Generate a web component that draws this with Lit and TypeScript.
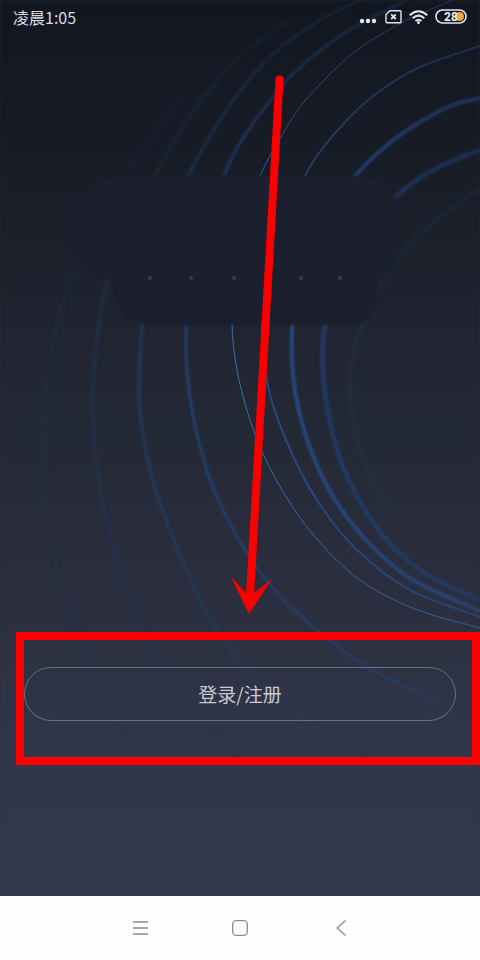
import { LitElement, html, svg, css } from "lit";
import { customElement } from "lit/decorators.js";

type Point = [number, number];

interface Arc {
  tone: string;
  width: number;
  points: Point[];
}

// Light trails of the backdrop, from the outermost to the innermost.
const ARCS: Arc[] = [
  { tone: "haze", width: 7, points: [[190, 86], [125, 176], [75, 270], [52, 350], [43, 460], [57, 570], [85, 655], [130, 740]] },
  { tone: "dim", width: 5, points: [[290, 20], [250, 48], [198, 104], [155, 176], [110, 270], [93, 390], [100, 490], [120, 565], [142, 625], [172, 682], [235, 754]] },
  { tone: "faint", width: 4, points: [[360, 0], [320, 20], [280, 48], [247, 82], [217, 125], [188, 176], [152, 265], [139, 385], [150, 470], [178, 550], [214, 625], [260, 684], [310, 723], [365, 752]] },
  { tone: "soft", width: 3, points: [[407, 0], [353, 28], [317, 53], [287, 80], [263, 110], [240, 143], [224, 176], [196, 250], [186, 335], [192, 410], [212, 485], [245, 550], [278, 594], [318, 631], [370, 669], [440, 702]] },
  { tone: "bright", width: 1, points: [[453, 0], [413, 17], [380, 35], [353, 53], [327, 77], [300, 107], [281, 137], [260, 176], [240, 237], [232, 310], [237, 370], [256, 437], [282, 490], [316, 538], [360, 580], [415, 609], [480, 628]] },
  { tone: "clear", width: 2, points: [[480, 46], [420, 67], [377, 93], [347, 120], [322, 149], [305, 176], [275, 245], [262, 325], [268, 386], [286, 440], [315, 497], [355, 548], [410, 590], [480, 617]] },
  { tone: "clear", width: 4, points: [[480, 98], [453, 105], [420, 122], [387, 145], [357, 174], [322, 222], [297, 290], [293, 375], [313, 456], [350, 521], [405, 575], [480, 611]] },
  { tone: "inside", width: 5, points: [[480, 150], [445, 164], [415, 181], [388, 205], [345, 265], [323, 345], [336, 446], [372, 521], [420, 570], [480, 600]] },
  { tone: "inner", width: 6, points: [[480, 188], [430, 225], [398, 258], [367, 310], [350, 380], [362, 455], [395, 520]] },
];

const SPARKS: Point[] = [[150, 278], [191, 278], [234, 278], [301, 278], [340, 278]];

// Smooth curve through every point (Catmull-Rom as cubic segments).
function curve(points: Point[]): string {
  let d = `M${points[0][0]} ${points[0][1]}`;
  for (let i = 0; i < points.length - 1; i++) {
    const p0 = points[Math.max(i - 1, 0)];
    const p1 = points[i];
    const p2 = points[i + 1];
    const p3 = points[Math.min(i + 2, points.length - 1)];
    const span = Math.hypot(p2[0] - p1[0], p2[1] - p1[1]);
    const before = Math.hypot(p1[0] - p0[0], p1[1] - p0[1]);
    const after = Math.hypot(p3[0] - p2[0], p3[1] - p2[1]);
    // Handles are scaled by the share of each segment, so uneven spacing stays smooth.
    const a = span / (span + before) / 3;
    const b = span / (span + after) / 3;
    const c = [
      p1[0] + (p2[0] - p0[0]) * a,
      p1[1] + (p2[1] - p0[1]) * a,
      p2[0] - (p3[0] - p1[0]) * b,
      p2[1] - (p3[1] - p1[1]) * b,
    ].map((n) => n.toFixed(1));
    d += `C${c[0]} ${c[1]} ${c[2]} ${c[3]} ${p2[0]} ${p2[1]}`;
  }
  return d;
}

@customElement("night-backdrop")
export class NightBackdrop extends LitElement {
  static styles = css`
    :host { display: block; }
    .art { display: block; width: 100%; height: 100%; }
    .arc { fill: none; }
    .bright { stroke: #3d78c0; opacity: 0.9; }
    .clear { stroke: #27508e; opacity: 0.85; }
    .soft { stroke: #21487c; opacity: 0.85; }
    .inside { stroke: #21447a; opacity: 0.65; }
    .faint { stroke: #1f456f; opacity: 0.55; }
    .dim { stroke: #203c60; opacity: 0.35; }
    .inner { stroke: #203c60; opacity: 0.25; }
    .haze { stroke: #243a60; opacity: 0.12; }
    .cover { fill: #1b1f2e; }
    .spark { fill: #2c4f82; opacity: 0.7; }
    .shade { stop-color: #fff; }
  `;

  render() {
    return html`
      <svg class="art" viewBox="0 0 480 896" preserveAspectRatio="xMidYMid slice" aria-hidden="true">
        <defs>
          <filter id="glow" x="-10%" y="-10%" width="120%" height="120%" color-interpolation-filters="sRGB">
            <feGaussianBlur stdDeviation="1" />
          </filter>
          <linearGradient id="fade" x1="0" y1="0" x2="0" y2="760" gradientUnits="userSpaceOnUse">
            <stop class="shade" offset="0" stop-opacity="0.4" />
            <stop class="shade" offset="0.22" stop-opacity="0.75" />
            <stop class="shade" offset="0.45" stop-opacity="1" />
            <stop class="shade" offset="0.7" stop-opacity="0.9" />
            <stop class="shade" offset="0.88" stop-opacity="0.6" />
            <stop class="shade" offset="1" stop-opacity="0.3" />
          </linearGradient>
          <mask id="veil" x="0" y="0" width="480" height="896" maskUnits="userSpaceOnUse">
            <rect width="480" height="896" fill="url(#fade)" />
          </mask>
        </defs>
        <g mask="url(#veil)">
          ${ARCS.map((a) => svg`<path class="arc ${a.tone}" d=${curve(a.points)} stroke-width=${a.width}
            filter=${a.width > 2 ? "url(#glow)" : "none"} />`)}
        </g>
        <path class="cover" filter="url(#glow)" d="M124 176H358C385 176 398 192 398 212V245C398 264 388 279 376 281C380 306 372 325 350 325H152C128 325 114 308 112 280C88 278 72 258 72 234V220C72 194 94 176 124 176Z" />
        ${SPARKS.map((p) => svg`<ellipse class="spark" cx=${p[0]} cy=${p[1]} rx="2" ry="2" />`)}
      </svg>
    `;
  }
}

@customElement("status-bar")
export class StatusBar extends LitElement {
  static styles = css`
    :host {
      display: flex;
      align-items: center;
      justify-content: space-between;
      height: 34px;
      padding: 0 13px;
      color: #dadce2;
      font: 16px/24px "Noto Sans CJK SC", sans-serif;
    }
    .icons { display: flex; align-items: center; gap: 6px; }
    .icon { display: block; }
    .level { font: bold 12px/16px Roboto, sans-serif; fill: #eceef2; }
  `;

  render() {
    return html`
      <span>凌晨1:05</span>
      <div class="icons">
        <svg class="icon" width="20" height="16" viewBox="0 0 20 16" fill="#e4e6ea" aria-hidden="true">
          <circle cx="3" cy="12" r="2.200" /><circle cx="9" cy="12" r="2.200" /><circle cx="15" cy="12" r="2.200" />
        </svg>
        <svg class="icon" width="18" height="16" viewBox="0 0 18 16" fill="none" stroke="#e4e6ea" stroke-width="1.4" aria-hidden="true">
          <path d="M5 1.700H15Q16 1.700 16 2.700V12.700Q16 13.700 15 13.700H2Q1 13.700 1 12.700V5.500Z" />
          <path d="M6.200 5.400L10.800 10M10.800 5.400L6.200 10" stroke-width="1.800" />
        </svg>
        <svg class="icon" width="20" height="16" viewBox="0 0 20 16" fill="none" stroke="#e4e6ea" stroke-width="2" aria-hidden="true">
          <path d="M0.700 6.200Q9.500 -1.800 18.300 6.200" />
          <path d="M3.700 9.200Q9.500 4 15.300 9.200" />
          <path d="M6.500 12Q9.500 9.400 12.500 12" />
          <circle cx="9.500" cy="13.500" r="1.500" fill="#e4e6ea" stroke="none" />
        </svg>
        <svg class="icon" width="32" height="16" viewBox="0 0 32 16" role="img" aria-label="28%">
          <rect x="1" y="1" width="30" height="13" rx="6.500" fill="none" stroke="#e4e6ea" stroke-width="1.600" />
          <circle cx="24.500" cy="7.500" r="4.500" fill="#f0a63c" />
          <text class="level" x="9" y="12">28</text>
        </svg>
      </div>
    `;
  }
}

@customElement("nav-bar")
export class NavBar extends LitElement {
  static styles = css`
    :host {
      display: flex;
      align-items: center;
      justify-content: center;
      gap: 76px;
      height: 64px;
      background: #fefefe;
    }
    .key {
      display: grid;
      place-items: center;
      width: 24px;
      height: 24px;
      padding: 0;
      border: 0;
      background: none;
      color: #8c8c8c;
    }
    .icon { display: block; fill: none; stroke: currentColor; }
  `;

  render() {
    return html`
      <button class="key" aria-label="菜单">
        <svg class="icon" width="16" height="16" viewBox="0 0 16 16" stroke-width="1.500"><path d="M1 2H16M1 8H16M1 14H16" /></svg>
      </button>
      <button class="key" aria-label="主页">
        <svg class="icon" width="16" height="16" viewBox="0 0 16 16" stroke-width="1.300"><rect x="0.700" y="0.700" width="14.600" height="14.600" rx="3.500" /></svg>
      </button>
      <button class="key" aria-label="返回">
        <svg class="icon" width="16" height="16" viewBox="0 0 16 16" stroke-width="1.300"><path d="M13.500 0.500L5 8L13.500 15.500" /></svg>
      </button>
    `;
  }
}

@customElement("app-root")
export class AppRoot extends LitElement {
  static styles = css`
    :host { display: flex; flex-direction: column; min-height: 100vh; }
    .screen {
      position: relative;
      display: flex;
      flex: 1;
      flex-direction: column;
      justify-content: space-between;
      background: linear-gradient(#121620 0%, #191d28 20%, #212632 40%, #292d3c 62%, #303548 82%, #343a4d 100%);
      box-shadow: inset 0 0 2px #3a2a36;
    }
    .backdrop, .arrow { position: absolute; inset: 0; width: 100%; height: 100%; }
    .arrow { pointer-events: none; }
    .status { position: relative; }
    .frame {
      position: relative;
      margin: 0 0 131px 16px;
      padding: 27px 16px 36px 0;
      border: 8px solid #fb0000;
    }
    .login {
      display: block;
      width: 100%;
      height: 54px;
      padding: 0;
      border: 1px solid #6c7080;
      border-radius: 27px;
      background: none;
      color: #c8cad0;
      font: 19px/28px "Noto Sans CJK SC", sans-serif;
    }
  `;

  render() {
    return html`
      <main class="screen">
        <night-backdrop class="backdrop"></night-backdrop>
        <status-bar class="status"></status-bar>
        <div class="frame"><button class="login">登录/注册</button></div>
        <svg class="arrow" viewBox="0 0 480 896" preserveAspectRatio="xMidYMid slice" aria-hidden="true">
          <path d="M279.500 79.500L250 596" fill="none" stroke="#fb0000" stroke-width="8" stroke-linecap="round" />
          <path d="M230.500 576L249 614L272 579L254 593H246Z" fill="#fb0000" />
        </svg>
      </main>
      <nav-bar></nav-bar>
    `;
  }
}
